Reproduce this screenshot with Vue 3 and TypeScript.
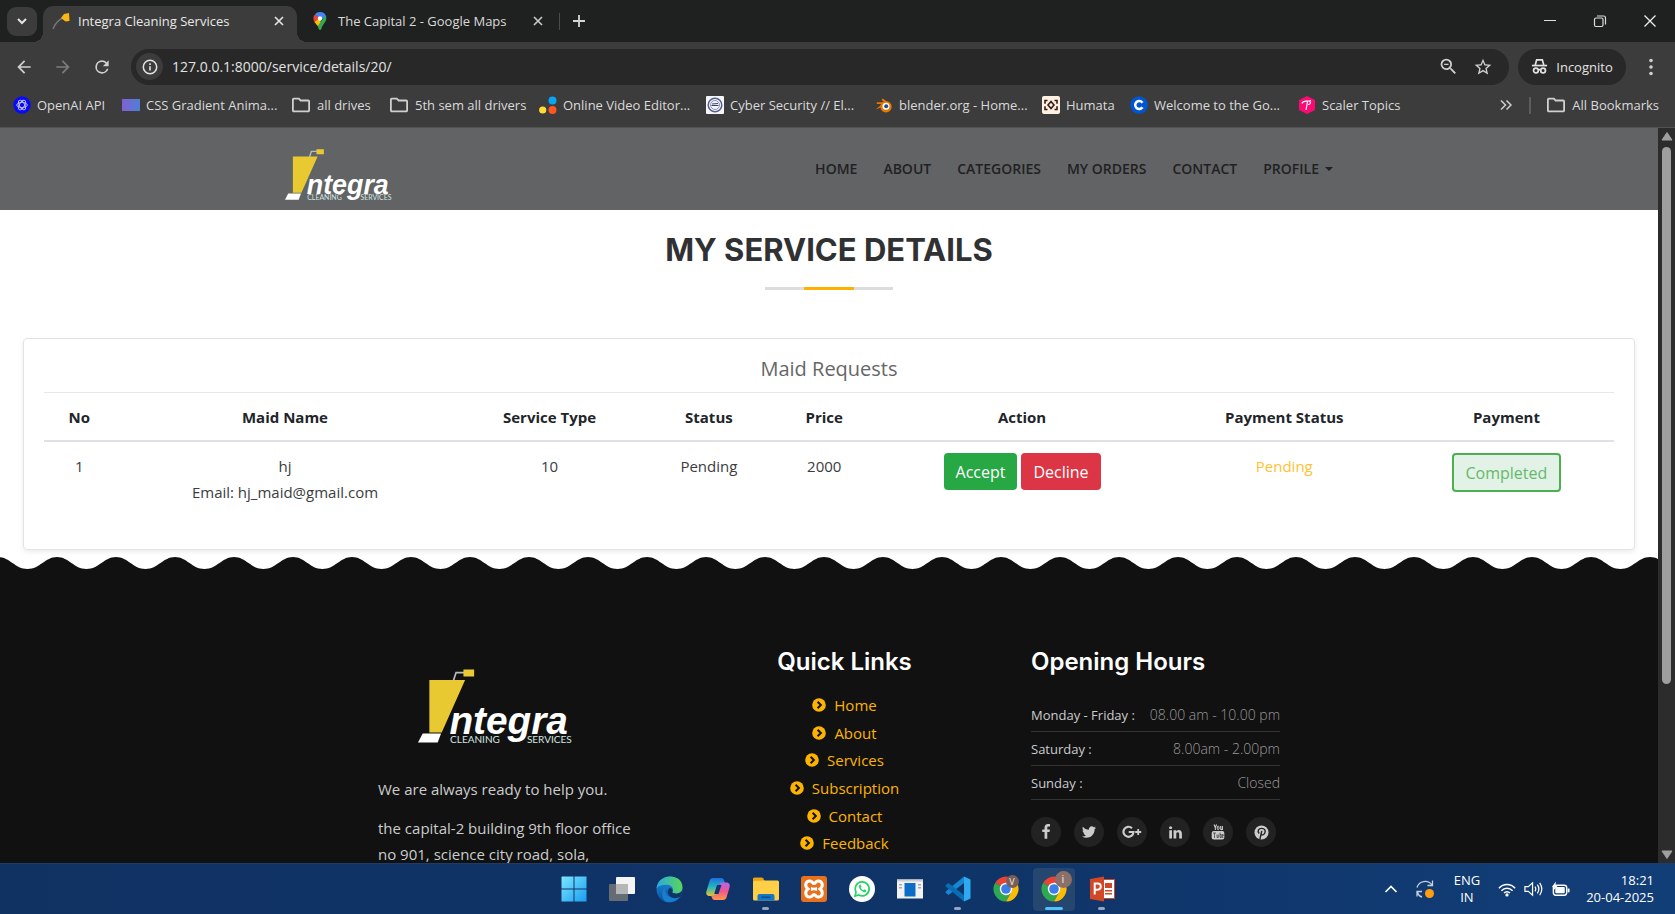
<script setup lang="ts">
import { ref } from 'vue'

interface Bookmark {
  label: string
  icon: string
}

interface MaidRequest {
  no: number
  name: string
  email: string
  serviceType: string
  status: string
  price: number
  paymentStatus: string
}

const address = ref('127.0.0.1:8000/service/details/20/')

const bookmarks: Bookmark[] = [
  { label: 'OpenAI API', icon: 'openai' },
  { label: 'CSS Gradient Anima...', icon: 'gradient' },
  { label: 'all drives', icon: 'folder' },
  { label: '5th sem all drivers', icon: 'folder' },
  { label: 'Online Video Editor...', icon: 'dots' },
  { label: 'Cyber Security // El...', icon: 'cyber' },
  { label: 'blender.org - Home...', icon: 'blender' },
  { label: 'Humata', icon: 'humata' },
  { label: 'Welcome to the Go...', icon: 'coursera' },
  { label: 'Scaler Topics', icon: 'scaler' },
]

const navItems: string[] = ['HOME', 'ABOUT', 'CATEGORIES', 'MY ORDERS', 'CONTACT']

const requests: MaidRequest[] = [
  {
    no: 1,
    name: 'hj',
    email: 'hj_maid@gmail.com',
    serviceType: '10',
    status: 'Pending',
    price: 2000,
    paymentStatus: 'Pending',
  },
]

const quickLinks: string[] = ['Home', 'About', 'Services', 'Subscription', 'Contact', 'Feedback']

const hours = [
  { day: 'Monday - Friday :', time: '08.00 am - 10.00 pm' },
  { day: 'Saturday :', time: '8.00am - 2.00pm' },
  { day: 'Sunday :', time: 'Closed' },
]

const socials: string[] = ['Facebook', 'Twitter', 'Google Plus', 'LinkedIn', 'YouTube', 'Pinterest']

const taskApps = [
  { name: 'Start', state: '' },
  { name: 'Task view', state: '' },
  { name: 'Edge', state: '' },
  { name: 'Copilot', state: '' },
  { name: 'File Explorer', state: 'open' },
  { name: 'XAMPP', state: '' },
  { name: 'WhatsApp', state: '' },
  { name: 'Window', state: '' },
  { name: 'VS Code', state: 'open' },
  { name: 'Chrome V', state: '' },
  { name: 'Chrome I', state: 'active' },
  { name: 'PowerPoint', state: 'open' },
]
</script>

<template>
  <div class="desktop">
    <header class="browser">
      <div class="tabstrip">
        <button class="tab-search" aria-label="Search tabs">
          <svg viewBox="0 0 16 16" width="16" height="16"><path d="M4 6l4 4 4-4" fill="none" stroke="#e3e3e3" stroke-width="2" /></svg>
        </button>
        <div class="tab active">
          <svg class="favicon" viewBox="0 0 18 18" width="18" height="18">
            <path d="M1 17C3 12 6 8 11 6" fill="none" stroke="#777" stroke-width="1.4" />
            <path d="M9 6l3-4 5-1 .5 8-4 .5z" fill="#fcb614" />
          </svg>
          <span class="tab-title">Integra Cleaning Services</span>
          <button class="tab-close" aria-label="Close tab">
            <svg viewBox="0 0 12 12" width="12" height="12"><path d="M2 2l8 8M10 2l-8 8" stroke="#e3e3e3" stroke-width="1.7" /></svg>
          </button>
        </div>
        <div class="tab second">
          <svg class="favicon" viewBox="0 0 14 18" width="14" height="18">
            <path d="M7 0a6.500 6.500 0 0 1 6.300 5L7 8 2 2.200A6.500 6.500 0 0 1 7 0z" fill="#4285f4" />
            <path d="M2 2.200L7 7l-5.200 3.500C-.2 7.500 0 4.500 2 2.200z" fill="#ea4335" />
            <path d="M1.500 10L7 6l1 6-3 2.500z" fill="#fbbc04" />
            <path d="M13.200 5c.8 5-3.700 6.500-5 12.200q-1.200 1.600-2.400 0L4.800 14 12 4z" fill="#34a853" />
            <circle cx="7" cy="6.500" r="2.200" fill="#fff" />
          </svg>
          <span class="tab-title">The Capital 2 - Google Maps</span>
          <button class="tab-close" aria-label="Close tab">
            <svg viewBox="0 0 12 12" width="12" height="12"><path d="M2 2l8 8M10 2l-8 8" stroke="#c7c7c7" stroke-width="1.700" /></svg>
          </button>
        </div>
        <span class="tab-divider"></span>
        <button class="new-tab" aria-label="New tab">
          <svg viewBox="0 0 14 14" width="14" height="14"><path d="M7 1v12M1 7h12" stroke="#d5d5d5" stroke-width="1.800" /></svg>
        </button>
        <div class="window-controls">
          <button aria-label="Minimize"><svg viewBox="0 0 14 14" width="14" height="14"><path d="M1 6.500h12" stroke="#ddd" /></svg></button>
          <button aria-label="Restore">
            <svg viewBox="0 0 14 14" width="14" height="14" fill="none" stroke="#ddd" stroke-width="1.200"><rect x="1.500" y="4" width="8.500" height="8.500" rx="1.500" /><path d="M4 2h6.500a2 2 0 0 1 2 2v6.500" /></svg>
          </button>
          <button aria-label="Close"><svg viewBox="0 0 14 14" width="14" height="14"><path d="M1.500 1.500l11 11M12.500 1.500l-11 11" stroke="#eee" stroke-width="1.300" /></svg></button>
        </div>
      </div>

      <div class="toolbar">
        <div class="nav-buttons">
          <button aria-label="Back"><svg viewBox="0 0 24 24" width="20" height="20"><path fill="#d0d0d0" d="M20 11H7.830l5.590-5.590L12 4l-8 8 8 8 1.410-1.410L7.830 13H20v-2z" /></svg></button>
          <button aria-label="Forward"><svg viewBox="0 0 24 24" width="20" height="20"><path fill="#7c7c7c" d="M4 11h12.170l-5.590-5.590L12 4l8 8-8 8-1.410-1.410L16.170 13H4v-2z" /></svg></button>
          <button aria-label="Reload"><svg viewBox="0 0 24 24" width="20" height="20"><path fill="#d0d0d0" d="M17.650 6.350A7.960 7.960 0 0 0 12 4a8 8 0 1 0 7.730 10h-2.080A6 6 0 1 1 12 6c1.660 0 3.140.69 4.220 1.780L13 11h7V4l-2.350 2.350z" /></svg></button>
        </div>
        <div class="omnibox">
          <button class="site-info" aria-label="Site information">
            <svg viewBox="0 0 16 16" width="16" height="16"><circle cx="8" cy="8" r="6.700" fill="none" stroke="#e3e3e3" stroke-width="1.500" /><path d="M8 7.200v4.300M8 4.300v1.600" stroke="#e3e3e3" stroke-width="1.600" /></svg>
          </button>
          <input v-model="address" class="address" type="text" aria-label="Address and search bar" />
          <button aria-label="Zoom"><svg viewBox="0 0 24 24" width="21" height="21"><path fill="#d0d0d0" d="M15.500 14h-.79l-.28-.27A6.470 6.470 0 0 0 16 9.500 6.500 6.500 0 1 0 9.500 16c1.610 0 3.090-.59 4.230-1.570l.27.28v.79l5 4.990L20.490 19l-4.990-5zm-6 0C7.010 14 5 11.990 5 9.500S7.010 5 9.500 5 14 7.010 14 9.500 11.990 14 9.500 14zM7 8.800h5v1.400H7z" /></svg></button>
          <button aria-label="Bookmark this tab"><svg viewBox="0 0 24 24" width="20" height="20"><path fill="#d0d0d0" d="M22 9.240l-7.190-.62L12 2 9.190 8.630 2 9.240l5.460 4.730L5.820 21 12 17.270 18.180 21l-1.630-7.030L22 9.240zM12 15.400l-3.760 2.270 1-4.280-3.320-2.880 4.380-.38L12 6.100l1.710 4.040 4.380.38-3.320 2.880 1 4.280L12 15.400z" /></svg></button>
        </div>
        <button class="incognito">
          <svg viewBox="0 0 18 18" width="17" height="17" fill="none" stroke="#e3e3e3" stroke-width="1.800"><path d="M4.500 7.500L6 2h6l1.500 5.500" /><path d="M1 8h16" /><circle cx="5.200" cy="13.300" r="2.500" /><circle cx="12.800" cy="13.300" r="2.500" /><path d="M7.700 12.800q1.300-.8 2.600 0" /></svg>
          Incognito
        </button>
        <button class="menu" aria-label="Menu"><svg viewBox="0 0 4 18" width="4" height="18" fill="#d0d0d0"><circle cx="2" cy="2.500" r="1.800" /><circle cx="2" cy="9" r="1.800" /><circle cx="2" cy="15.500" r="1.800" /></svg></button>
      </div>

      <nav class="bookmarks" aria-label="Bookmarks">
        <div class="bookmark-list">
          <a v-for="b in bookmarks" :key="b.label" href="#" class="bookmark">
            <svg v-if="b.icon === 'openai'" viewBox="0 0 18 18" width="18" height="18"><circle cx="9" cy="9" r="8.700" fill="#0a0af5" /><g fill="none" stroke="#bfc4ff" stroke-width=".9"><ellipse cx="9" cy="9" rx="5.300" ry="2.600" /><ellipse cx="9" cy="9" rx="5.300" ry="2.600" transform="rotate(60 9 9)" /><ellipse cx="9" cy="9" rx="5.300" ry="2.600" transform="rotate(120 9 9)" /></g></svg>
            <svg v-else-if="b.icon === 'gradient'" viewBox="0 0 18 18" width="18" height="18"><defs><linearGradient id="bm-grad"><stop stop-color="#8160d0" /><stop offset="1" stop-color="#4d80d6" /></linearGradient></defs><rect y="3" width="18" height="12" fill="url(#bm-grad)" /></svg>
            <svg v-else-if="b.icon === 'folder'" viewBox="1 2 22 20" width="20" height="18"><path fill="#d0d0d0" d="M20 6h-8l-2-2H4c-1.100 0-1.990.9-1.990 2L2 18c0 1.100.9 2 2 2h16c1.100 0 2-.9 2-2V8c0-1.100-.9-2-2-2zm0 12H4V6h5.170l2 2H20v10z" /></svg>
            <svg v-else-if="b.icon === 'dots'" viewBox="0 0 18 18" width="18" height="18"><circle cx="13.500" cy="4.500" r="4" fill="#09a5f5" /><circle cx="3.700" cy="14" r="3.600" fill="#ffdc35" /><circle cx="13.500" cy="14" r="4" fill="#ff5722" /></svg>
            <svg v-else-if="b.icon === 'cyber'" viewBox="0 0 18 18" width="18" height="18"><rect width="18" height="18" rx="1" fill="#f5f6fa" /><circle cx="9" cy="9" r="6.800" fill="none" stroke="#56608c" stroke-width="1.500" /><circle cx="9" cy="9" r="4.500" fill="none" stroke="#8c94b4" /><path d="M5.500 9.500h7M6 8l6-.5" stroke="#39446f" stroke-width="1.200" /></svg>
            <svg v-else-if="b.icon === 'blender'" viewBox="0 0 18 18" width="18" height="18"><path d="M.5 13.500L7.500 8H1.800V6.200h7.500L6.500 4l1.300-1.600 7.500 5.500z" fill="#ea7600" /><circle cx="11" cy="10.700" r="5.700" fill="#ea7600" /><circle cx="11" cy="10.300" r="3.500" fill="#fff" /><circle cx="11.200" cy="10.300" r="2" fill="#16548b" /></svg>
            <svg v-else-if="b.icon === 'humata'" viewBox="0 0 18 18" width="18" height="18"><rect width="18" height="18" rx="2" fill="#fff0e4" /><g fill="none" stroke="#3b1c14" stroke-width="1.600"><path d="M5.500 4.500H3v3.200M3 10.300v3.200h2.500M12.500 4.500H15v3.200M15 10.300v3.200h-2.500M9 5.500L12 9l-3 3.500L6 9z" /></g></svg>
            <svg v-else-if="b.icon === 'coursera'" viewBox="0 0 18 18" width="18" height="18"><circle cx="9" cy="9" r="8.800" fill="#0056d2" /><path d="M12.500 6.700A4 4 0 1 0 12.500 11.300" fill="none" stroke="#fff" stroke-width="2.500" /></svg>
            <svg v-else viewBox="0 0 18 18" width="18" height="18"><path d="M9 0l8 4v10l-8 4-8-4V4z" fill="#fb0a73" /><path d="M4 7.500C5 4 8 6 13 4.500M9.500 5.500L8 14M11 5.500c2 0 2 3-1 3" fill="none" stroke="#fff" stroke-width="1.200" /></svg>
            <span>{{ b.label }}</span>
          </a>
        </div>
        <button class="more" aria-label="More bookmarks"><svg viewBox="0 0 12 12" width="12" height="12"><path d="M1 1.500L5.500 6 1 10.500M6.500 1.500L11 6l-4.500 4.500" fill="none" stroke="#d0d0d0" stroke-width="1.500" /></svg></button>
        <span class="bm-divider"></span>
        <a href="#" class="bookmark all">
          <svg viewBox="1 2 22 20" width="20" height="18"><path fill="#d0d0d0" d="M20 6h-8l-2-2H4c-1.100 0-1.990.9-1.990 2L2 18c0 1.100.9 2 2 2h16c1.100 0 2-.9 2-2V8c0-1.100-.9-2-2-2zm0 12H4V6h5.170l2 2H20v10z" /></svg>
          <span>All Bookmarks</span>
        </a>
      </nav>
    </header>

    <div class="viewport">
      <div class="page">
        <div class="site-header">
          <div class="header-inner">
            <a href="#" class="brand" aria-label="Integra Cleaning Services">
              <svg class="logo-small" viewBox="176 88 458 220">
                <path d="M282 122l8-24h24" fill="none" stroke="#b9bcbc" stroke-width="6" />
                <path d="M312 89h32v21h-32z M210 120h107l-70 157h-37z" fill="#e9c931" />
                <path d="M190 280h55l-10 27h-59z" fill="#fff" />
                <text x="270" y="283" class="logo-name">ntegra</text>
                <text x="272" y="308" class="logo-sub">CLEANING</text>
                <text x="502" y="308" class="logo-sub">SERVICES</text>
              </svg>
            </a>
            <nav class="site-nav" aria-label="Main">
              <a v-for="n in navItems" :key="n" href="#">{{ n }}</a>
              <button class="profile">PROFILE <span class="caret"></span></button>
            </nav>
          </div>
        </div>

        <main class="content">
          <h1>MY SERVICE DETAILS</h1>
          <div class="rule"><span></span></div>

          <section class="card">
            <h2>Maid Requests</h2>
            <table>
              <colgroup>
                <col class="c-no" /><col class="c-name" /><col class="c-type" /><col class="c-status" />
                <col class="c-price" /><col class="c-action" /><col class="c-paystatus" /><col class="c-pay" />
              </colgroup>
              <thead>
                <tr>
                  <th>No</th><th>Maid Name</th><th>Service Type</th><th>Status</th>
                  <th>Price</th><th>Action</th><th>Payment Status</th><th>Payment</th>
                </tr>
              </thead>
              <tbody>
                <tr v-for="r in requests" :key="r.no">
                  <td>{{ r.no }}</td>
                  <td>{{ r.name }}<br />Email: {{ r.email }}</td>
                  <td>{{ r.serviceType }}</td>
                  <td>{{ r.status }}</td>
                  <td>{{ r.price }}</td>
                  <td>
                    <div class="actions">
                      <button class="btn accept">Accept</button>
                      <button class="btn decline">Decline</button>
                    </div>
                  </td>
                  <td class="warn">{{ r.paymentStatus }}</td>
                  <td>
                    <div class="actions">
                      <button class="btn completed">Completed</button>
                    </div>
                  </td>
                </tr>
              </tbody>
            </table>
          </section>
        </main>

        <footer class="site-footer">
          <svg class="wave" width="100%" height="14" aria-hidden="true">
            <defs>
              <pattern id="wave-pattern" x="-2" width="59" height="14" patternUnits="userSpaceOnUse">
                <path d="M0 1C12 1 17 13 29.500 13S47 1 59 1V14H0z" fill="#111" />
              </pattern>
            </defs>
            <rect width="100%" height="14" fill="url(#wave-pattern)" />
          </svg>
          <div class="footer-body">
            <div class="footer-grid">
              <div class="about">
                <svg class="logo-large" viewBox="176 88 458 220">
                  <path d="M282 122l8-24h24" fill="none" stroke="#b9bcbc" stroke-width="5" />
                  <path d="M312 89h32v21h-32z M210 120h107l-70 157h-37z" fill="#e9c931" />
                  <path d="M190 280h55l-10 27h-59z" fill="#fff" />
                  <text x="270" y="283" class="logo-name">ntegra</text>
                  <text x="272" y="308" class="logo-sub">CLEANING</text>
                  <text x="502" y="308" class="logo-sub">SERVICES</text>
                </svg>
                <p>We are always ready to help you.</p>
                <p>the capital-2 building 9th floor office<br />no 901, science city road, sola,</p>
              </div>

              <div class="links">
                <h3>Quick Links</h3>
                <ul>
                  <li v-for="l in quickLinks" :key="l">
                    <a href="#">
                      <svg viewBox="0 0 14 14" width="14" height="14"><circle cx="7" cy="7" r="6.800" fill="#fdb400" /><path d="M5.600 3.700L8.900 7l-3.300 3.300" fill="none" stroke="#111" stroke-width="2" /></svg>
                      {{ l }}
                    </a>
                  </li>
                </ul>
              </div>

              <div class="hours">
                <h3>Opening Hours</h3>
                <dl>
                  <div v-for="h in hours" :key="h.day"><dt>{{ h.day }}</dt><dd>{{ h.time }}</dd></div>
                </dl>
                <div class="socials">
                  <a v-for="s in socials" :key="s" href="#" :aria-label="s">
                    <svg v-if="s === 'Facebook'" viewBox="0 0 1792 1792" width="16" height="16"><path fill="#ccc" d="M1343 12v264h-157q-86 0-116 36t-30 108v189h293l-39 296h-254v759h-306v-759h-255v-296h255v-218q0-186 104-288.500t277-102.500q147 0 228 12z" /></svg>
                    <svg v-else-if="s === 'Twitter'" viewBox="0 0 1792 1792" width="16" height="16"><path fill="#ccc" d="M1684 408q-67 98-162 167 1 14 1 42 0 130-38 259.500t-115.500 248.500-184.500 210.500-258 146-323 54.500q-271 0-496-145 35 4 78 4 225 0 401-138-105-2-188-64.500t-114-159.500q33 5 61 5 43 0 85-11-112-23-185.500-111.500t-73.500-205.500v-4q68 38 146 41-66-44-105-115t-39-154q0-88 44-163 121 149 294.500 238.500t371.500 99.500q-8-38-8-74 0-134 94.500-228.500t228.500-94.500q140 0 236 102 109-21 205-78-37 115-142 178 93-10 186-50z" /></svg>
                    <svg v-else-if="s === 'Google Plus'" viewBox="0 0 20 14" width="20" height="14"><path d="M10 3.200A5 5 0 1 0 11.500 7H6.700" fill="none" stroke="#ccc" stroke-width="2.200" /><path d="M16.200 4v6M13.200 7h6" stroke="#ccc" stroke-width="1.800" /></svg>
                    <svg v-else-if="s === 'LinkedIn'" viewBox="0 0 1792 1792" width="15" height="15"><path fill="#ccc" d="M477 625v991h-330v-991h330zm21-306q1 73-50.500 122t-135.500 49h-2q-82 0-132-49t-50-122q0-74 51.500-122.500t134.500-48.500 133 48.500 51 122.500zm1166 729v568h-329v-530q0-105-40.500-164.500t-126.500-59.500q-63 0-105.500 34.500t-62.500 85.500q-11 30-11 81v553h-329q2-399 2-647t-1-296l-1-48h329v144h-2q20-32 41-56t56.500-52 87-43.500 114.500-15.500q171 0 275 113.500t104 332.500z" /></svg>
                    <svg v-else-if="s === 'YouTube'" viewBox="0 0 14 16" width="14" height="16"><path d="M3 .5l1.300 3V6M5.600 .5l-1.300 3" fill="none" stroke="#ccc" stroke-width="1.100" /><rect x="6.300" y="2.200" width="1.700" height="3.400" rx=".8" fill="none" stroke="#ccc" /><path d="M9.700 2v3.300q.9.700 1.700-.3M11.400 2v4" fill="none" stroke="#ccc" stroke-width="1.100" /><rect x=".7" y="7" width="12.600" height="8.500" rx="2" fill="#ccc" /><path d="M2 9h3M3.500 9v5M6 10.500V13.500h1.300v-3M9 8.500v5h1.200v-3H9M12.300 11.900h-1.100v-1.400h1v1.400M11.200 12v1.500h1.100" fill="none" stroke="#333" stroke-width=".7" /></svg>
                    <svg v-else viewBox="0 0 16 16" width="15" height="15"><circle cx="8" cy="8" r="7.500" fill="#ccc" /><path d="M6.200 15.500L8.300 6.200M5.500 9C3.200 6.300 5 3.600 8.200 3.600s4.600 2.800 3.200 5.200-3.300 2-3.900 .7" fill="none" stroke="#222" stroke-width="1.500" /></svg>
                  </a>
                </div>
              </div>
            </div>
          </div>
        </footer>
      </div>

      <div class="scrollbar" aria-hidden="true">
        <svg viewBox="0 0 12 9" width="12" height="9"><path d="M6 0.500L11 8H1z" fill="#9f9f9f" stroke="#9f9f9f" stroke-linejoin="round" /></svg>
        <div class="track"><div class="thumb"></div></div>
        <svg viewBox="0 0 12 9" width="12" height="9"><path d="M6 8.500L11 1H1z" fill="#9f9f9f" stroke="#9f9f9f" stroke-linejoin="round" /></svg>
      </div>
    </div>

    <div class="taskbar">
      <div></div>
      <div class="apps">
        <button v-for="a in taskApps" :key="a.name" :class="['app', a.state]" :aria-label="a.name">
          <svg v-if="a.name === 'Start'" viewBox="0 0 26 26" width="26" height="26"><defs><linearGradient id="win" x2="1" y2="1"><stop stop-color="#7be8ff" /><stop offset="1" stop-color="#1a9df0" /></linearGradient></defs><path d="M1 .5h11.500V12.500H.5V1zM13.500 .5h12v12h-12zM.5 13.500h12v12H.5zM13.500 13.500h12v12h-12z" fill="url(#win)" /></svg>
          <svg v-else-if="a.name === 'Task view'" viewBox="0 0 26 26" width="26" height="26"><rect x="7" y="1" width="19" height="17" rx="1" fill="#f4f4f4" /><rect y="8" width="19" height="17" rx="1" fill="#707275" opacity=".9" /><path d="M7 8h12v10H7z" fill="#b5b6b8" /></svg>
          <svg v-else-if="a.name === 'Edge'" viewBox="0 0 26 26" width="27" height="27"><defs><linearGradient id="edge1" x2="1"><stop stop-color="#2ba9e0" /><stop offset="1" stop-color="#5ad658" /></linearGradient><linearGradient id="edge2" x2="0" y2="1"><stop stop-color="#1b8fdb" /><stop offset="1" stop-color="#0d4fa0" /></linearGradient></defs><circle cx="13" cy="13" r="12.500" fill="url(#edge2)" /><path d="M.5 12C2-3 25-3 25.500 10.500c0 6-6 7.500-10 5.500 2-2 1-7-4.500-7.500C6 8 2 9.500.5 12z" fill="url(#edge1)" /><path d="M9 11c-2 6 3 11.500 12 9.500l2.500-1C20 24.500 14 26.500 9 24.500 5 21 5 14 9 11z" fill="#1680cf" /><path d="M15.500 16c2.500 1.500 7 1.500 9.500-1.500l.3 1.500-2 4c-5 3-11 1-12-4.500 0-2.500 1.500-4 3-4 1.600 1 2 3 1.200 4.500z" fill="#0f3568" /></svg>
          <svg v-else-if="a.name === 'Copilot'" viewBox="0 0 26 26" width="26" height="26"><defs><linearGradient id="cop1" x2="0" y2="1"><stop stop-color="#1d6fe0" /><stop offset=".5" stop-color="#25b5c0" /><stop offset="1" stop-color="#e8c52d" /></linearGradient><linearGradient id="cop2" x2="0" y2="1"><stop stop-color="#b565ef" /><stop offset=".5" stop-color="#f0568d" /><stop offset="1" stop-color="#ff9a4a" /></linearGradient></defs><path d="M8 2h8c2 0 2.700 1 3.300 3l.7 2h-3c-1.500 0-2.500 1-3 3l-2.300 7.500c-.5 1.500-1.200 2.500-3 2.500H4.500C1.500 20 .7 17.500 1.500 15L4.500 5C5 3 6 2 8 2z" fill="url(#cop1)" /><path d="M18 24h-8c-2 0-2.700-1-3.300-3L6 19.500h3c1.500 0 2.500-1 3-3L14.300 9c.5-1.500 1.200-2.500 3-2.500h4.200c3 0 3.800 2.500 3 5l-3 10c-.5 1.500-1.500 2.500-3.500 2.500z" fill="url(#cop2)" /><path d="M12 9h4.500l-3 9H9.200z" fill="#0f3468" /></svg>
          <svg v-else-if="a.name === 'File Explorer'" viewBox="0 0 26 26" width="26" height="26"><path d="M0 3q0-1.500 1.500-1.500H9L12 5h12q2 0 2 2v5H0z" fill="#e09c0b" /><rect y="4.500" width="26" height="20" rx="1.500" fill="#ffcf48" /><path d="M0 4.500h8l3-2.500H0z" fill="#e8a50e" /><path d="M4.500 24.500V20q0-2 2-2h13q2 0 2 2v4.500z" fill="#1476c6" /><path d="M8.500 20.500h9v1.500h-9z" fill="#0a4c8c" /></svg>
          <svg v-else-if="a.name === 'XAMPP'" viewBox="0 0 26 26" width="26" height="26"><rect width="26" height="26" rx="3" fill="#e9711c" /><path d="M9 5c-5 0-5.500 5.500-2 8-3.500 2.500-3 8 2 8 2.500 0 2.500-2.500 4-2.500s1.500 2.500 4 2.500c5 0 5.500-5.500 2-8 3.500-2.500 3-8-2-8-2.500 0-2.500 2.500-4 2.500S11.500 5 9 5z" fill="none" stroke="#fff" stroke-width="3" /><path d="M10 11q3 1.500 6 0v4q-3-1.500-6 0z" fill="#fff" /></svg>
          <svg v-else-if="a.name === 'WhatsApp'" viewBox="0 0 26 26" width="26" height="26"><circle cx="13" cy="13" r="13" fill="#fff" /><path d="M6 20l1-3.800A7 7 0 1 1 9.800 19z" fill="none" stroke="#25d366" stroke-width="1.700" /><path d="M10 9.500c-.8 3 3.500 7.200 6.500 6.700l.8-1.700-2-1.200-1 1c-1.400-.6-2.200-1.500-2.700-2.700l.9-1-1-2z" fill="#25d366" /></svg>
          <svg v-else-if="a.name === 'Window'" viewBox="0 0 26 26" width="26" height="26"><rect y="3.500" width="26" height="19" fill="#f2f2f2" /><path d="M0 3.500h26v2H0z" fill="#cfcfcf" /><rect x="7.500" y="7" width="11" height="13.500" fill="#0d6cc5" /><path d="M2 8h3v1.500H2zM2 11h3v1.500H2zM21 8h3v1.500h-3zM21 11h3v1.500h-3z" fill="#aaa" /></svg>
          <svg v-else-if="a.name === 'VS Code'" viewBox="0 0 26 26" width="26" height="26"><path d="M19 .5l6.500 3v19l-6.500 3z" fill="#2fa9f1" /><path d="M19 .5V7L3.500 19 .7 17v-1.500z" fill="#1787d0" /><path d="M19 25.500V19L3.500 7 .7 9v1.500z" fill="#0a6cb5" /></svg>
          <svg v-else-if="a.name === 'PowerPoint'" viewBox="0 0 26 26" width="26" height="26"><rect x="13" y="3.500" width="12.500" height="19" fill="#fff" stroke="#d24726" /><path d="M16 7h7v5h-7zM16 14h7v1.500h-7zM16 17h7v1.500h-7z" fill="#d24726" /><path d="M1 3L15 .5v25L1 23z" fill="#d24726" /><path d="M5.700 18.500V7.500h3a3 3 0 0 1 0 6.200h-3" fill="none" stroke="#fff" stroke-width="2" /></svg>
          <svg v-else viewBox="0 0 26 26" width="26" height="26"><path d="M13 13L2.200 6.700A12.500 12.500 0 0 1 23.800 6.700z" fill="#ea4335" /><path d="M13 13L2.200 6.700A12.500 12.500 0 0 0 13 25.500l5-9z" fill="#2fa84f" /><path d="M13 13l5 3.500-5 9A12.500 12.500 0 0 0 23.800 6.700H13z" fill="#fbbc05" /><circle cx="13" cy="13" r="6.200" fill="#fff" /><circle cx="13" cy="13" r="4.800" fill="#3b7de9" /></svg>
          <span v-if="a.name === 'Chrome V'" class="badge">V</span>
          <span v-if="a.name === 'Chrome I'" class="badge big">i</span>
        </button>
      </div>
      <div class="tray">
        <button class="tray-btn" aria-label="Show hidden icons"><svg viewBox="0 0 14 14" width="14" height="14"><path d="M1.500 10L7 4.500l5.500 5.500" fill="none" stroke="#fff" stroke-width="1.600" /></svg></button>
        <button class="tray-btn sync" aria-label="Updates"><svg viewBox="0 0 20 20" width="20" height="20"><path d="M2 8.500C4 1.500 13 .5 17 6M17.500 1.500V6.500h-5M7 18c-2.500-.7-4-2.500-4.500-5M2 17.500v-5h5" fill="none" stroke="#c5d0e2" stroke-width="1.300" /><circle cx="14.500" cy="14.500" r="4.500" fill="#ff9d12" /></svg></button>
        <span class="lang">ENG<br />IN</span>
        <button class="tray-btn quick" aria-label="Network, volume and battery">
          <svg viewBox="0 0 20 16" width="18" height="15" fill="none" stroke="#fff" stroke-width="1.600"><path d="M1 6.500C6 1 14 1 19 6.500M3.800 9.300c3.500-3.700 8.900-3.700 12.400 0M6.700 12c1.800-2 4.800-2 6.600 0" /><circle cx="10" cy="14" r="1" fill="#fff" /></svg>
          <svg viewBox="0 0 20 16" width="19" height="16" fill="none" stroke="#fff" stroke-width="1.300"><path d="M1 5.500h3.500L9 1.500v13L4.500 10.500H1zM11.500 5.500q1.800 2.500 0 5M14 3.500q3.300 4.500 0 9M16.500 1.500q4.500 6.500 0 13" /></svg>
          <svg viewBox="0 0 20 16" width="19" height="16"><rect x="2.500" y="4" width="14" height="10.500" rx="2.500" fill="none" stroke="#fff" stroke-width="1.500" /><rect x="4.500" y="6" width="10" height="6.500" rx="1" fill="#fff" /><path d="M17.500 7.500h2v4h-2z" fill="#fff" /><path d="M5 0L1 6h2.500L2.500 9.500 7 4.500H4.800z" fill="#fff" /></svg>
        </button>
        <time class="clock">18:21<br />20-04-2025</time>
      </div>
    </div>
  </div>
</template>

<style>
html,
body {
  margin: 0;
  overflow: hidden;
}
</style>

<style scoped>
* {
  box-sizing: border-box;
}

button,
input {
  font: inherit;
  color: inherit;
  border: 0;
  padding: 0;
  background: none;
}

button {
  display: inline-flex;
  align-items: center;
  justify-content: center;
  flex: none;
}

svg {
  display: block;
  flex: none;
}

a {
  text-decoration: none;
  color: inherit;
}

.desktop {
  display: flex;
  flex-direction: column;
  height: 100vh;
  font-family: "Open Sans", "Noto Sans", sans-serif;
  overflow: hidden;
}

/* Browser chrome */
.browser {
  flex: none;
  background: #3c3c3c;
  color: #dadada;
  font-size: 13px;
  border-bottom: 1px solid #505152;
}

.tabstrip {
  display: flex;
  align-items: center;
  height: 42px;
  padding-left: 7px;
  background: #1f2120;
}

.tab-search {
  width: 30px;
  height: 29px;
  border-radius: 9px;
  background: #3c3c3c;
}

.tab {
  display: flex;
  align-items: center;
  height: 36px;
  align-self: flex-end;
  white-space: nowrap;
}

.tab.active {
  position: relative;
  width: 254px;
  margin-left: 6px;
  padding: 0 12px 6px 9px;
  background: #3c3c3c;
  border-radius: 10px 10px 0 0;
  color: #e8e8e8;
}

.tab.active::before,
.tab.active::after {
  content: "";
  position: absolute;
  bottom: 0;
  width: 10px;
  height: 10px;
}

.tab.active::before {
  right: 100%;
  background: radial-gradient(circle at 0 0, transparent 10px, #3c3c3c 10px);
}

.tab.active::after {
  left: 100%;
  background: radial-gradient(circle at 100% 0, transparent 10px, #3c3c3c 10px);
}

.tab.second {
  width: 262px;
  padding: 0 15px 6px 16px;
}

.favicon {
  margin-right: 8px;
}

.second .favicon {
  margin-right: 11px;
}

.tab-title {
  flex: 1;
}

.tab-divider {
  width: 1px;
  height: 17px;
  background: #4a4c4b;
}

.new-tab {
  margin-left: 12px;
}

.window-controls {
  display: flex;
  gap: 36px;
  margin-left: auto;
  padding-right: 18px;
}

.toolbar {
  display: flex;
  align-items: center;
  height: 49px;
  padding: 0 22px 0 14px;
}

.nav-buttons {
  display: flex;
  gap: 19px;
  margin-right: 19px;
}

.omnibox {
  flex: 1;
  display: flex;
  align-items: center;
  gap: 14px;
  height: 36px;
  padding: 0 16px 0 5px;
  border-radius: 18px;
  background: #282828;
}

.site-info {
  width: 27px;
  height: 27px;
  border-radius: 50%;
  background: #3c3c3c;
}

.address {
  flex: 1;
  min-width: 0;
  font-size: 14px;
  line-height: 24px;
  color: #e2e2e2;
  margin-left: -5px;
  outline: none;
}

.incognito {
  gap: 8px;
  width: 108px;
  height: 36px;
  margin-left: 9px;
  border-radius: 18px;
  background: #282828;
  color: #e3e3e3;
}

.menu {
  margin-left: 23px;
}

.bookmarks {
  display: flex;
  align-items: center;
  height: 36px;
  padding: 0 16px 8px 13px;
}

.bookmark-list {
  flex: 1;
  display: grid;
  grid-template-columns: 109px 169px 98px 150px 167px 169px 167px 88px 168px auto;
  justify-content: start;
}

.bookmark {
  display: flex;
  align-items: center;
  gap: 6px;
  white-space: nowrap;
}

.bm-divider {
  width: 2px;
  height: 17px;
  margin: 0 15px 0 17px;
  background: #5d5d5d;
}

/* Web page */
.viewport {
  flex: 1;
  min-height: 0;
  display: flex;
  background: #fff;
}

.page {
  flex: 1;
  min-width: 0;
  overflow: hidden;
  color: #212529;
  font-size: 15px;
  line-height: 26px;
}

.site-header {
  background: #626365;
}

.header-inner {
  display: flex;
  align-items: center;
  justify-content: space-between;
  max-width: 1088px;
  height: 82px;
  margin: 0 auto;
  padding: 0 40px 0 0;
}

.brand {
  padding-top: 11px;
}

.logo-small {
  width: 106px;
  height: 51px;
  overflow: visible;
}

.logo-name {
  font: italic bold 116px "Liberation Sans", Arial, sans-serif;
  fill: #fff;
}

.logo-sub {
  font: 30px Lato, sans-serif;
  fill: #d3e6e2;
}

.site-nav {
  display: flex;
  align-items: center;
  gap: 26px;
  color: #1f2122;
  font-size: 14px;
  font-weight: 600;
}

.profile {
  gap: 6px;
}

.caret {
  border: 4px solid transparent;
  border-top-color: #1f2122;
  border-bottom: 0;
}

.content {
  padding: 20px 23px 6px;
}

h1 {
  margin: 0;
  text-align: center;
  color: #303133;
  font: bold 31px/40px Inter, sans-serif;
}

.rule {
  width: 128px;
  height: 3px;
  margin: 17px auto 48px;
  background: #dcdcdc;
}

.rule span {
  display: block;
  width: 50px;
  height: 3px;
  margin: 0 auto;
  background: #fdb201;
}

.card {
  min-height: 212px;
  padding: 16px 20px;
  border: 1px solid #e2e3e4;
  border-radius: 4px;
  box-shadow: 0 2px 5px rgba(0, 0, 0, 0.08);
}

.card h2 {
  margin: 0 0 10px;
  text-align: center;
  color: #666;
  font-size: 20px;
  font-weight: 400;
  line-height: 27px;
}

table {
  width: 100%;
  table-layout: fixed;
  border-collapse: collapse;
  text-align: center;
}

.c-no { width: 4.5%; }
.c-name { width: 21.7%; }
.c-type { width: 12%; }
.c-status { width: 8.3%; }
.c-price { width: 6.4%; }
.c-action { width: 18.8%; }
.c-paystatus { width: 14.6%; }
.c-pay { width: 13.7%; }

th,
td {
  padding: 11px 0;
  vertical-align: top;
}

th {
  padding-bottom: 10px;
  font-weight: 700;
  border-top: 1px solid #e6e8ea;
  border-bottom: 2px solid #dee2e6;
}

td {
  color: #3a3d40;
}

td.warn {
  color: #ffc233;
}

.actions {
  display: flex;
  justify-content: center;
  gap: 4px;
}

.btn {
  height: 37px;
  padding: 0 12px;
  border-radius: 4px;
  font-size: 16px;
}

.accept {
  background: #28a745;
  color: #fff;
}

.decline {
  background: #dc3545;
  color: #fff;
}

.completed {
  height: 39px;
  border: 2px solid #4caf50;
  background: #e2f2e6;
  color: #66b96a;
}

.wave {
  width: 100%;
}

.footer-body {
  background: #111;
  color: #ccc;
}

.footer-grid {
  display: grid;
  grid-template-columns: 280px 373px 249px;
  justify-content: center;
  padding-top: 78px;
  min-height: 320px;
}

.logo-large {
  width: 153px;
  height: 74px;
  margin: 21px 0 33px 40px;
  overflow: visible;
}

.about p {
  margin: 0 0 13px;
}

h3 {
  margin: 0;
  color: #fff;
  font: 600 24px/28px Inter, sans-serif;
}

.links {
  text-align: center;
}

.links ul {
  display: grid;
  grid-auto-rows: 1fr;
  height: 166px;
  margin: 16px 0 0;
  padding: 0;
  list-style: none;
}

.links a {
  display: inline-flex;
  align-items: center;
  gap: 8px;
  color: #fdb400;
}

.hours dl {
  margin: 22px 0 17px;
}

.hours dl div {
  display: flex;
  justify-content: space-between;
  align-items: center;
  height: 34px;
  border-bottom: 1px solid #333;
}

dt {
  font-size: 13px;
}

dd {
  margin: 0;
  font-size: 14px;
  font-weight: 300;
  color: #999;
}

.socials {
  display: flex;
  gap: 13px;
}

.socials a {
  display: flex;
  align-items: center;
  justify-content: center;
  width: 30px;
  height: 30px;
  border-radius: 50%;
  background: #222;
}

.scrollbar {
  display: flex;
  flex-direction: column;
  align-items: center;
  gap: 6px;
  width: 17px;
  padding: 4px 0;
  background: #2c2c2c;
}

.track {
  flex: 1;
  width: 9px;
}

.thumb {
  height: 77%;
  border-radius: 5px;
  background: #9f9f9f;
}

/* Taskbar */
.taskbar {
  flex: none;
  display: grid;
  grid-template-columns: 1fr auto 1fr;
  align-items: center;
  height: 51px;
  border-top: 1px solid #1c3c6c;
  background: linear-gradient(90deg, #103263, #0f3468 60%, #123e78);
  color: #fff;
  font-size: 13px;
}

.apps {
  display: flex;
  gap: 6px;
}

.app {
  position: relative;
  width: 42px;
  height: 43px;
  border-radius: 4px;
}

.app.active {
  background: #24466f;
}

.app.open::after,
.app.active::after {
  content: "";
  position: absolute;
  bottom: 1px;
  width: 7px;
  height: 3px;
  border-radius: 2px;
  background: #94a5c2;
}

.app.active::after {
  width: 18px;
  background: #4cc2ff;
}

.badge {
  position: absolute;
  top: 7px;
  right: 8px;
  width: 13px;
  height: 13px;
  border-radius: 50%;
  background: #795e56;
  color: #eee;
  font-size: 9px;
  line-height: 13px;
  text-align: center;
}

.badge.big {
  top: 3px;
  right: 3px;
  width: 17px;
  height: 17px;
  background: #8c7068;
  font-size: 11px;
  line-height: 16px;
}

.tray {
  display: flex;
  align-items: center;
  justify-content: flex-end;
  padding-right: 21px;
  line-height: 17px;
}

.sync {
  margin: 0 19px 0 17px;
}

.lang {
  text-align: center;
}

.quick {
  gap: 8px;
  margin: 0 16px 0 18px;
}

.clock {
  text-align: right;
}
</style>
